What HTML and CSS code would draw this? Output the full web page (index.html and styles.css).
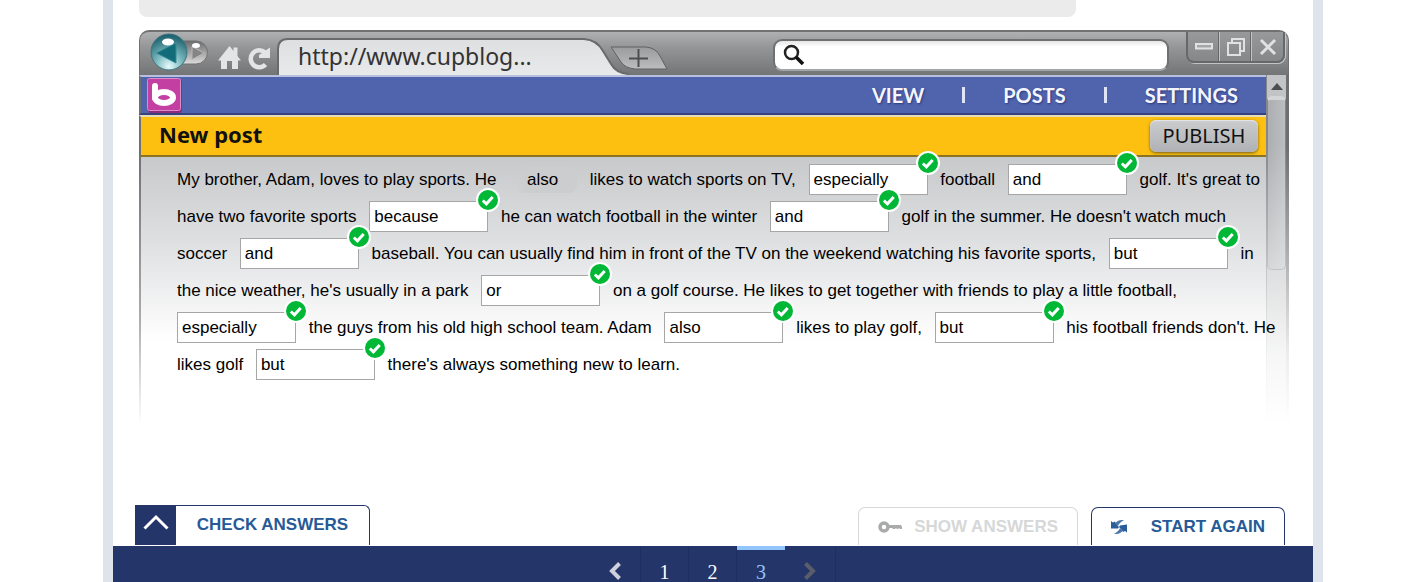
FILE: index.html
```html
<!DOCTYPE html>
<html lang="en">
<head>
<meta charset="utf-8">
<title>New post</title>
<link rel="stylesheet" href="styles.css">
</head>
<body>
<svg class="defs" width="0" height="0" aria-hidden="true">
  <symbol id="tick" viewBox="0 0 24 24">
    <circle cx="12" cy="12" r="12" fill="#fff"/>
    <circle cx="12" cy="12" r="10" fill="#00b835"/>
    <path d="M6.800 12.500l3.600 3.300 6.300-6.800" fill="none" stroke="#fff" stroke-width="3"/>
  </symbol>
</svg>
<div class="frame">
  <div class="rubric"></div>
  <main class="window">
    <header class="chrome">
      <svg class="chrome-icons" width="136" height="44" viewBox="0 0 136 44" aria-hidden="true">
        <defs>
          <radialGradient id="orb" cx=".5" cy=".9" r=".9"><stop offset="0" stop-color="#e6fafa"/><stop offset=".4" stop-color="#7fbcc2"/><stop offset="1" stop-color="#145a67"/></radialGradient>
          <linearGradient id="pill" x1="0" y1="0" x2="0" y2="1"><stop offset="0" stop-color="#6c6c6c"/><stop offset="1" stop-color="#dcdcdc"/></linearGradient>
        </defs>
        <path d="M40 9h16a11.500 11.500 0 0 1 0 23H40z" fill="url(#pill)" stroke="#707173"/>
        <path d="M52 14.500l12 6.500-12 6.500z" fill="#858585" stroke="#b8b8b8"/>
        <ellipse cx="56" cy="13.500" rx="4" ry="2.500" fill="#fff"/>
        <circle cx="29" cy="20" r="18" fill="url(#orb)" stroke="#3f737c"/>
        <path d="M16.500 21L36 11v20z" fill="#116b78" stroke="#348c96"/>
        <ellipse cx="28" cy="10" rx="6" ry="3.500" fill="#fff"/>
        <path d="M78 28.500L89.500 14l4 5v-3.500h4V24l3.500 4.500h-3V37h-6v-8h-5v8h-6v-8.500z" fill="#e3e4e5"/>
        <path d="M125.500 32.500a8.500 8.500 0 1 1-.5-12" fill="none" stroke="#e3e4e5" stroke-width="4.500"/>
        <path d="M130 15.500V26h-11v-3z" fill="#e3e4e5"/>
      </svg>
      <div class="tab">
        <svg class="tab-shape" viewBox="0 0 392 43" width="392" height="43" aria-hidden="true">
          <defs>
            <linearGradient id="tabfill" x1="0" y1="0" x2="0" y2="1"><stop offset="0" stop-color="#dedfe0"/><stop offset="1" stop-color="#e9eaeb"/></linearGradient>
            <linearGradient id="plusfill" x1="0" y1="0" x2="0" y2="1"><stop offset="0" stop-color="#999b9d"/><stop offset="1" stop-color="#bbbdbf"/></linearGradient>
          </defs>
          <path d="M2 45V17Q2 7 12 7H308Q321 8 327 19L335 32Q340 41 352 42V45" fill="url(#tabfill)" stroke="#696a6b" stroke-width="2"/>
          <path d="M335 15H370Q380 16 384 24L391 37H359Q349 36 345 30Z" fill="url(#plusfill)" stroke="#606163"/>
          <path d="M353 26.500h19M362.500 17v18" stroke="#4d4e50" stroke-width="2"/>
        </svg>
        <span class="tab-text">http://www.cupblog...</span>
      </div>
      <label class="search">
        <svg width="22" height="22" viewBox="0 0 22 22" aria-hidden="true"><circle cx="8.500" cy="8.500" r="6.500" fill="none" stroke="#222" stroke-width="2.500"/><path d="M13 13l7 7" stroke="#111" stroke-width="3.500"/></svg>
        <input class="search-input" type="text" aria-label="Search">
      </label>
      <div class="controls">
        <button class="control" aria-label="Minimise"><svg width="20" height="20" viewBox="0 0 20 20"><path d="M2 7h16v4.500H2z" fill="#a4a6a8" stroke="#e0e1e2" stroke-width="2"/></svg></button>
        <button class="control" aria-label="Restore"><svg width="20" height="20" viewBox="0 0 20 20"><path d="M6 5V2h12v12h-4M2 6h12v12H2z" fill="none" stroke="#e0e1e2" stroke-width="2"/></svg></button>
        <button class="control" aria-label="Close"><svg width="20" height="20" viewBox="0 0 20 20"><path d="M3 3l14 14M17 3L3 17" stroke="#e0e1e2" stroke-width="3"/></svg></button>
      </div>
    </header>
    <nav class="menu">
      <svg class="logo" width="36" height="36" viewBox="0 0 36 36" aria-hidden="true"><rect x="2" y="2" width="34" height="34" rx="3" fill="#8d2b7d"/><rect x="1.500" y="1.500" width="33" height="32" rx="2" fill="#c340a2" stroke="#dc8cc7"/><path d="M9 9v12" stroke="#fff" stroke-width="6" stroke-linecap="round"/><ellipse cx="18" cy="20.500" rx="9" ry="5.500" fill="none" stroke="#fff" stroke-width="6"/></svg>
      <div class="menu-links">
        <a class="menu-link" href="#">VIEW</a><span class="bar"></span>
        <a class="menu-link" href="#">POSTS</a><span class="bar"></span>
        <a class="menu-link" href="#">SETTINGS</a>
      </div>
    </nav>
    <div class="titlebar">
      <h1 class="title">New post</h1>
      <button class="publish">PUBLISH</button>
    </div>
    <div class="scroll">
      <svg class="scroll-up" width="12" height="8" viewBox="0 0 12 8" aria-hidden="true"><path d="M0 8l6-7 6 7z" fill="#4c4d4f"/></svg>
      <div class="thumb"></div>
    </div>
    <div class="post">
      <div class="line">My brother, Adam, loves to play sports. He <span class="example">also</span> likes to watch sports on TV,
        <span class="gap"><input class="answer" value="especially" aria-label="Answer 1"><svg class="tick" width="24" height="24"><use href="#tick"/></svg></span> football
        <span class="gap"><input class="answer" value="and" aria-label="Answer 2"><svg class="tick" width="24" height="24"><use href="#tick"/></svg></span> golf. It's great to</div>
      <div class="line">have two favorite sports
        <span class="gap"><input class="answer" value="because" aria-label="Answer 3"><svg class="tick" width="24" height="24"><use href="#tick"/></svg></span> he can watch football in the winter
        <span class="gap"><input class="answer" value="and" aria-label="Answer 4"><svg class="tick" width="24" height="24"><use href="#tick"/></svg></span> golf in the summer. He doesn't watch much</div>
      <div class="line">soccer
        <span class="gap"><input class="answer" value="and" aria-label="Answer 5"><svg class="tick" width="24" height="24"><use href="#tick"/></svg></span> baseball. You can usually find him in front of the TV on the weekend watching his favorite sports,
        <span class="gap"><input class="answer" value="but" aria-label="Answer 6"><svg class="tick" width="24" height="24"><use href="#tick"/></svg></span> in</div>
      <div class="line">the nice weather, he's usually in a park
        <span class="gap"><input class="answer" value="or" aria-label="Answer 7"><svg class="tick" width="24" height="24"><use href="#tick"/></svg></span> on a golf course. He likes to get together with friends to play a little football,</div>
      <div class="line"><span class="gap gap-first"><input class="answer" value="especially" aria-label="Answer 8"><svg class="tick" width="24" height="24"><use href="#tick"/></svg></span> the guys from his old high school team. Adam
        <span class="gap"><input class="answer" value="also" aria-label="Answer 9"><svg class="tick" width="24" height="24"><use href="#tick"/></svg></span> likes to play golf,
        <span class="gap"><input class="answer" value="but" aria-label="Answer 10"><svg class="tick" width="24" height="24"><use href="#tick"/></svg></span> his football friends don't. He</div>
      <div class="line">likes golf
        <span class="gap"><input class="answer" value="but" aria-label="Answer 11"><svg class="tick" width="24" height="24"><use href="#tick"/></svg></span> there's always something new to learn.</div>
    </div>
  </main>
  <div class="actions">
    <div class="check">
      <button class="expand" aria-label="Expand"><svg width="26" height="16" viewBox="0 0 26 16"><path d="M1.500 14.500L13 3l11.500 11.500" fill="none" stroke="#fff" stroke-width="3"/></svg></button>
      <button class="check-label">CHECK ANSWERS</button>
    </div>
    <button class="action action-off" disabled><svg width="24" height="12" viewBox="0 0 24 12" aria-hidden="true"><circle cx="6" cy="6" r="4" fill="none" stroke="#a9abab" stroke-width="3.500"/><path d="M10 4h13l1 2v2h-2l-1-1-1 1h-1l-1-1-1 1h-2l-1-1h-4z" fill="#a9abab"/></svg>SHOW ANSWERS</button>
    <button class="action action-start"><svg width="16" height="14" viewBox="0 0 16 14" aria-hidden="true"><path d="M0 1l2 1.500 2-1L6 5l2 2-1 1.500H0z" fill="#2a5d9b"/><path d="M4 4Q6 0 11 0h2Q8 3 7 6z" fill="#4a76ac"/><path d="M16 12.500L14 11l-2 1-2-3-2-2 1-1.500 7-1z" fill="#2a5d9b"/><path d="M12 10q-2 4-7 4H3q5-3 6-6z" fill="#4a76ac"/></svg>START AGAIN</button>
  </div>
  <nav class="pager" aria-label="Pages">
    <a class="page page-step" href="#" aria-label="Previous"><svg width="14" height="18" viewBox="0 0 14 18"><path d="M11.500 1.500L4 9l7.500 7.500" fill="none" stroke="#cfd2dd" stroke-width="4"/></svg></a>
    <a class="page" href="#">1</a>
    <a class="page" href="#">2</a>
    <a class="page page-on" href="#">3</a>
    <a class="page page-step" href="#" aria-label="Next"><svg width="14" height="18" viewBox="0 0 14 18"><path d="M2.500 1.500L10 9l-7.500 7.500" fill="none" stroke="#5b5e68" stroke-width="4"/></svg></a>
  </nav>
</div>
</body>
</html>
```

FILE: styles.css
```css
* { box-sizing: border-box; }
body {
  margin: 0;
  padding-left: 10px;
  background: #fff;
  color: #000;
  font: 17px/37px "Liberation Sans", Arial, sans-serif;
}
button { margin: 0; padding: 0; border: 0; background: none; font: inherit; color: inherit; }
a { text-decoration: none; color: inherit; }
svg { display: block; flex: none; }
.defs { position: absolute; }

.frame {
  display: flex;
  flex-direction: column;
  max-width: 1220px;
  min-height: 100vh;
  margin: 0 auto;
  border: solid #dfe3ec;
  border-width: 0 10px;
}
.rubric {
  width: 937px;
  max-width: 100%;
  height: 17px;
  margin: 0 26px 13px;
  border-radius: 0 0 8px 8px;
  background: #ebebeb;
}

.window {
  display: grid;
  grid-template-columns: 1fr 23px;
  grid-template-rows: 45px 40px 42px auto;
  margin: 0 24px 0 26px;
}
.chrome {
  grid-column: 1 / 3;
  display: flex;
  padding-right: 3px;
  border: solid #707173;
  border-width: 2px 1px 0;
  border-radius: 10px 10px 0 0;
  background: linear-gradient(#aeb0b2, #949698 35%, #737475);
}
.tab { position: relative; width: 392px; }
.tab-shape { position: absolute; left: 0; top: 0; }
.tab-text {
  position: relative;
  display: block;
  padding-left: 22px;
  font: 23px/48px "Noto Sans", "Open Sans", sans-serif;
  color: #333;
}
.search {
  flex: 1;
  display: flex;
  align-items: center;
  gap: 8px;
  height: 32px;
  margin: 7px 17px 0 105px;
  padding: 0 8px;
  border: 2px solid #6f7072;
  border-bottom-color: #a4a5a6;
  border-radius: 9px;
  background: linear-gradient(#e6e6e6, #fff 6px);
}
.search-input { flex: 1; min-width: 0; border: 0; outline: 0; background: none; }
.controls {
  display: flex;
  height: 31px;
  border: solid #67686a;
  border-width: 0 2px 2px;
  border-radius: 0 0 8px 8px;
  box-shadow: 1px 1px 0 #c3c4c5;
  background: linear-gradient(#97999b, #868789);
}
.control { display: flex; align-items: center; justify-content: center; width: 31px; }
.control + .control { width: 32px; border-left: 1px solid #c2c3c4; box-shadow: -1px 0 0 #67686a; }

.menu {
  display: flex;
  align-items: center;
  justify-content: space-between;
  padding: 0 28px 0 5px;
  border-top: 2px solid #b9bfdf;
  border-bottom: 2px solid #35427f;
  border-left: 2px solid #6e7074;
  background: #5063ad;
}
.menu-links {
  display: flex;
  align-items: center;
  gap: 38px;
  font: bold 20px/36px Lato, "Open Sans", sans-serif;
  color: #f4f6ff;
  text-shadow: 1px 1px 2px #2c3a7d;
}
.bar { width: 3px; height: 16px; background: #dfe4f6; }
.titlebar {
  display: flex;
  align-items: center;
  justify-content: space-between;
  padding: 0 8px 0 18px;
  border-top: 2px solid #e6dcb8;
  border-bottom: 2px solid #8a7424;
  border-left: 2px solid #6e7074;
  background: #fdc010;
}
.title { align-self: flex-start; margin: 0; font: bold 22px/35px "Noto Sans", "Open Sans", sans-serif; color: #111; }
.publish {
  width: 108px;
  height: 32px;
  border-radius: 6px;
  background: linear-gradient(#cbccce, #b0b1b4);
  box-shadow: 0 1px 3px #6d5a1c, inset 0 1px 1px #e6e6e6;
  font: 20px/32px "Noto Sans", "Open Sans", sans-serif;
  color: #111;
}
.scroll {
  grid-column: 2;
  grid-row: 2 / 5;
  border-left: 1px solid #85878a;
  border-right: 3px solid #6d6e70;
  background: linear-gradient(#c3c4c6, #b6b8ba);
  -webkit-mask-image: linear-gradient(#000 20%, rgba(0,0,0,.5) 55%, rgba(0,0,0,.12) 80%, transparent);
  mask-image: linear-gradient(#000 20%, rgba(0,0,0,.5) 55%, rgba(0,0,0,.12) 80%, transparent);
}
.scroll-up { margin: 7px auto 6px; }
.thumb {
  height: 174px;
  border: 1px solid #85878a;
  border-top: 4px solid #d4d5d6;
  border-radius: 5px;
  background: linear-gradient(90deg, #acaeb1, #bbbdc0);
}
.post {
  grid-column: 1 / 3;
  grid-row: 4;
  z-index: 1;
  min-height: 268px;
  padding: 4px 4px 0 38px;
  background:
    linear-gradient(#707275, #a9abad 60%, transparent) left / 2px 100% no-repeat,
    linear-gradient(#c8c9cb, #dedfe1 45%, transparent) left top / calc(100% - 23px) 184px no-repeat;
}
.line { white-space: nowrap; }
.gap { position: relative; display: inline-block; width: 119px; margin: 0 8px; line-height: 31px; }
.gap-first { margin-left: 0; }
.answer {
  display: block;
  width: 100%;
  height: 31px;
  padding: 0 4px;
  border: 1px solid #a6a6a6;
  border-radius: 0;
  background: #fff;
  color: #000;
  font: inherit;
}
.tick { position: absolute; right: -12px; top: -13px; }
.example {
  display: inline-block;
  width: 62px;
  margin: 0 8px 0 14px;
  padding-left: 12px;
  border-radius: 8px;
  background: linear-gradient(90deg, transparent, #cccdce 20%);
  line-height: 26px;
}

.actions { display: flex; align-items: flex-end; gap: 13px; margin: auto 28px 1px 22px; }
.check {
  display: flex;
  width: 235px;
  height: 40px;
  margin-right: auto;
  border: solid #243569;
  border-width: 1px 1px 0 0;
  border-radius: 0 6px 0 0;
}
.expand { display: flex; justify-content: center; width: 41px; padding-top: 8px; background: #243569; }
.check-label, .action { font-weight: bold; color: #265a97; }
.check-label { flex: 1; padding-bottom: 2px; }
.action {
  display: flex;
  align-items: center;
  justify-content: space-between;
  width: 220px;
  height: 38px;
  padding: 0 19px;
  border: 1px solid #243569;
  border-bottom: 0;
  border-radius: 7px 7px 0 0;
}
.action-off { border-color: #d6d8d8; color: #d6d8d8; }
.action-start { width: 194px; }

.pager {
  display: flex;
  justify-content: center;
  height: 36px;
  background: #243569;
  color: #fff;
  font: 20px/20px "Liberation Serif", "Times New Roman", serif;
}
.page { display: flex; justify-content: center; width: 48px; padding-top: 16px; border-right: 1px solid #1f2f60; }
.page-step { width: 51px; }
.page-on { border-top: 4px solid #92c5fb; border-right: 0; padding-top: 12px; color: #92c5fb; }
```
